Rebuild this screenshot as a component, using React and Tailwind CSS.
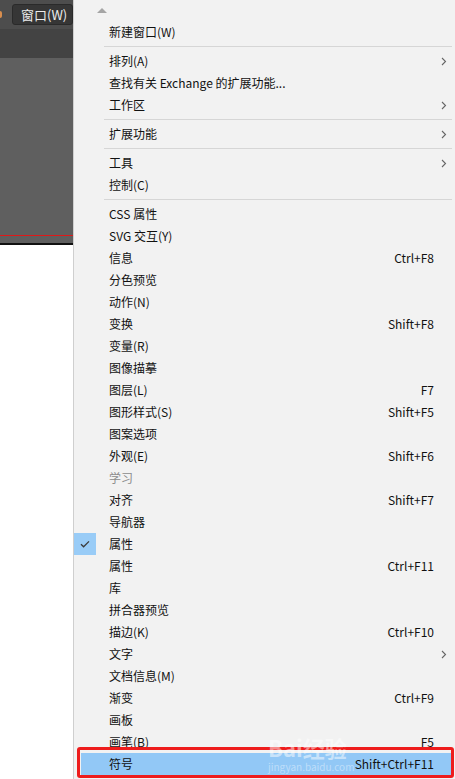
import React from 'react';

const MENU = [
  { sep: false, label: '新建窗口(W)' },
  { sep: true },
  { label: '排列(A)', sub: true },
  { label: '查找有关 Exchange 的扩展功能...' },
  { label: '工作区', sub: true },
  { sep: true },
  { label: '扩展功能', sub: true },
  { sep: true },
  { label: '工具', sub: true },
  { label: '控制(C)' },
  { sep: true },
  { label: 'CSS 属性' },
  { label: 'SVG 交互(Y)' },
  { label: '信息', key: 'Ctrl+F8' },
  { label: '分色预览' },
  { label: '动作(N)' },
  { label: '变换', key: 'Shift+F8' },
  { label: '变量(R)' },
  { label: '图像描摹' },
  { label: '图层(L)', key: 'F7' },
  { label: '图形样式(S)', key: 'Shift+F5' },
  { label: '图案选项' },
  { label: '外观(E)', key: 'Shift+F6' },
  { label: '学习', disabled: true },
  { label: '对齐', key: 'Shift+F7' },
  { label: '导航器' },
  { label: '属性', checked: true },
  { label: '属性', key: 'Ctrl+F11' },
  { label: '库' },
  { label: '拼合器预览' },
  { label: '描边(K)', key: 'Ctrl+F10' },
  { label: '文字', sub: true },
  { label: '文档信息(M)' },
  { label: '渐变', key: 'Ctrl+F9' },
  { label: '画板' },
  { label: '画笔(B)', key: 'F5' },
  { label: '符号', key: 'Shift+Ctrl+F11', active: true },
];

const Chevron = () => (
  <svg width="6" height="9" viewBox="0 0 6 9" className="text-[#666]">
    <path d="M1 1l3.5 3.5L1 8" fill="none" stroke="currentColor" strokeWidth="1.1" />
  </svg>
);

const Check = () => (
  <svg width="12" height="10" viewBox="0 0 12 10">
    <path d="M2 5.2l2.6 2.6L10 2.4" fill="none" stroke="#3b3b3b" strokeWidth="1.3" />
  </svg>
);

const Row = ({ item }) => (
  <div className={`relative flex h-[22px] items-center ${item.active ? 'bg-[#92c8f6] ml-[7px] mr-[2px]' : ''}`}>
    <div className={`${item.active ? 'w-[28px]' : 'w-[35px]'} flex h-full shrink-0 items-center justify-center`}>
      {item.checked && (
        <div className="ml-[-14px] flex h-[22px] w-[22px] items-center justify-center bg-[#99ccf7]">
          <Check />
        </div>
      )}
    </div>
    <span className={`flex-1 whitespace-nowrap ${item.disabled ? 'text-[#8c8c8c]' : 'text-[#111]'}`}>{item.label}</span>
    <span className="whitespace-nowrap text-[#111]">{item.key}</span>
    <div className={`${item.active ? 'w-[18px]' : 'w-[20px]'} flex shrink-0 items-center justify-center`}>
      {item.sub && <Chevron />}
    </div>
  </div>
);

export default function App() {
  return (
    <div className="relative flex h-[779px] w-[455px] overflow-hidden bg-white text-[12px]" style={{ fontFamily: '"Noto Sans CJK SC", "Liberation Sans", sans-serif' }}>
      {/* left: app workspace */}
      <div className="flex w-[73px] shrink-0 flex-col">
        <div className="flex h-[29px] items-center bg-[#4d4d4d]">
          <div className="h-[7px] w-[2px] rounded-r-full bg-[#d98e4e]" />
          <div className="ml-[10px] flex h-[21px] flex-1 items-center rounded-[3px] border border-[#2a2a2a] bg-[#363636] pl-[8px] text-[13px] text-[#ececec]">
            窗口(W)
          </div>
        </div>
        <div className="h-[29px] bg-[#434343]" />
        <div className="flex h-[185px] flex-col justify-end bg-[#5f5f5f]">
          <div className="h-[1px] bg-[#e01818]" />
          <div className="h-[7px]" />
        </div>
        <div className="h-[2px] bg-[#111]" />
        <div className="flex-1 bg-white" />
      </div>

      {/* dropdown menu */}
      <div className="flex flex-1 flex-col border-l border-[#cfcfcf] bg-[#f2f2f2] pr-[1px]">
        <div className="flex h-[21px] items-center pl-[23px]">
          <div className="h-0 w-0 border-x-[5px] border-b-[5px] border-x-transparent border-b-[#a5a5a5]" />
        </div>
        {MENU.map((item, i) =>
          item.sep ? (
            <div key={i} className="flex h-[7px] items-center pl-[30px] pr-[2px]">
              <div className="h-[1px] flex-1 bg-[#d6d6d6]" />
            </div>
          ) : (
            <Row key={i} item={item} />
          )
        )}
      </div>

      {/* annotation around the last row */}
      <div className="absolute left-[77px] top-[747px] h-[31px] w-[377px] rounded-[3px] border-[3px] border-[#ee1c1c]" />

      {/* watermark */}
      <div className="pointer-events-none absolute left-[268px] top-[731px] text-[22px] font-bold text-white/50">Bai经验</div>
      <div className="pointer-events-none absolute left-[268px] top-[759px] text-[10px] text-white/40">jingyan.baidu.com</div>
    </div>
  );
}
